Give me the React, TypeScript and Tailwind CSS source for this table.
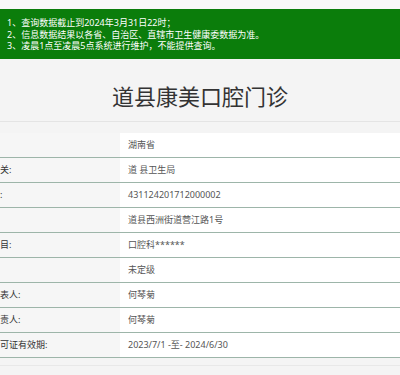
import React from "react";

const rows: [string, string][] = [
  ["", "湖南省"],
  ["关:", "道 县卫生局"],
  [":", "431124201712000002"],
  ["", "道县西洲街道营江路1号"],
  ["目:", "口腔科******"],
  ["", "未定级"],
  ["表人:", "何琴菊"],
  ["责人:", "何琴菊"],
  ["可证有效期:", "2023/7/1 -至- 2024/6/30"],
];

export default function App() {
  return (
    <div
      className="w-[400px] h-[375px] overflow-hidden bg-[#f4f4f4]"
      style={{ fontFamily: '"Noto Sans", "Noto Sans CJK SC", sans-serif' }}
    >
      <div className="h-[9px] bg-[#f8f8f8]" />
      <div className="bg-[#0b7d0b] text-white text-[9px] leading-[11.5px] pl-[7px] pt-[8px] pb-[8px] h-[50px]">
        <div>1、查询数据截止到2024年3月31日22时；</div>
        <div>2、信息数据结果以各省、自治区、直辖市卫生健康委数据为准。</div>
        <div>3、凌晨1点至凌晨5点系统进行维护，不能提供查询。</div>
      </div>
      <div className="pt-[25px] pb-[13px] border-b border-[#e4e4e4] text-center text-[22px] leading-[24px] text-[#333]">
        道县康美口腔门诊
      </div>
      <div className="pt-[11px]">
        <div className="w-full border-b border-[#e8e8e8] pb-[7px]">
          {rows.map(([k, v], i) => (
            <div key={i} className="flex h-[25px] border-b border-[#9db5a9] text-[9px]">
              <div className="w-[120px] shrink-0 bg-[#f6f6f6] flex items-center text-[#333] whitespace-nowrap">
                {k}
              </div>
              <div className="flex-1 bg-white flex items-center pl-[8px] text-[#555] whitespace-nowrap">
                {v}
              </div>
            </div>
          ))}
        </div>
      </div>
    </div>
  );
}
